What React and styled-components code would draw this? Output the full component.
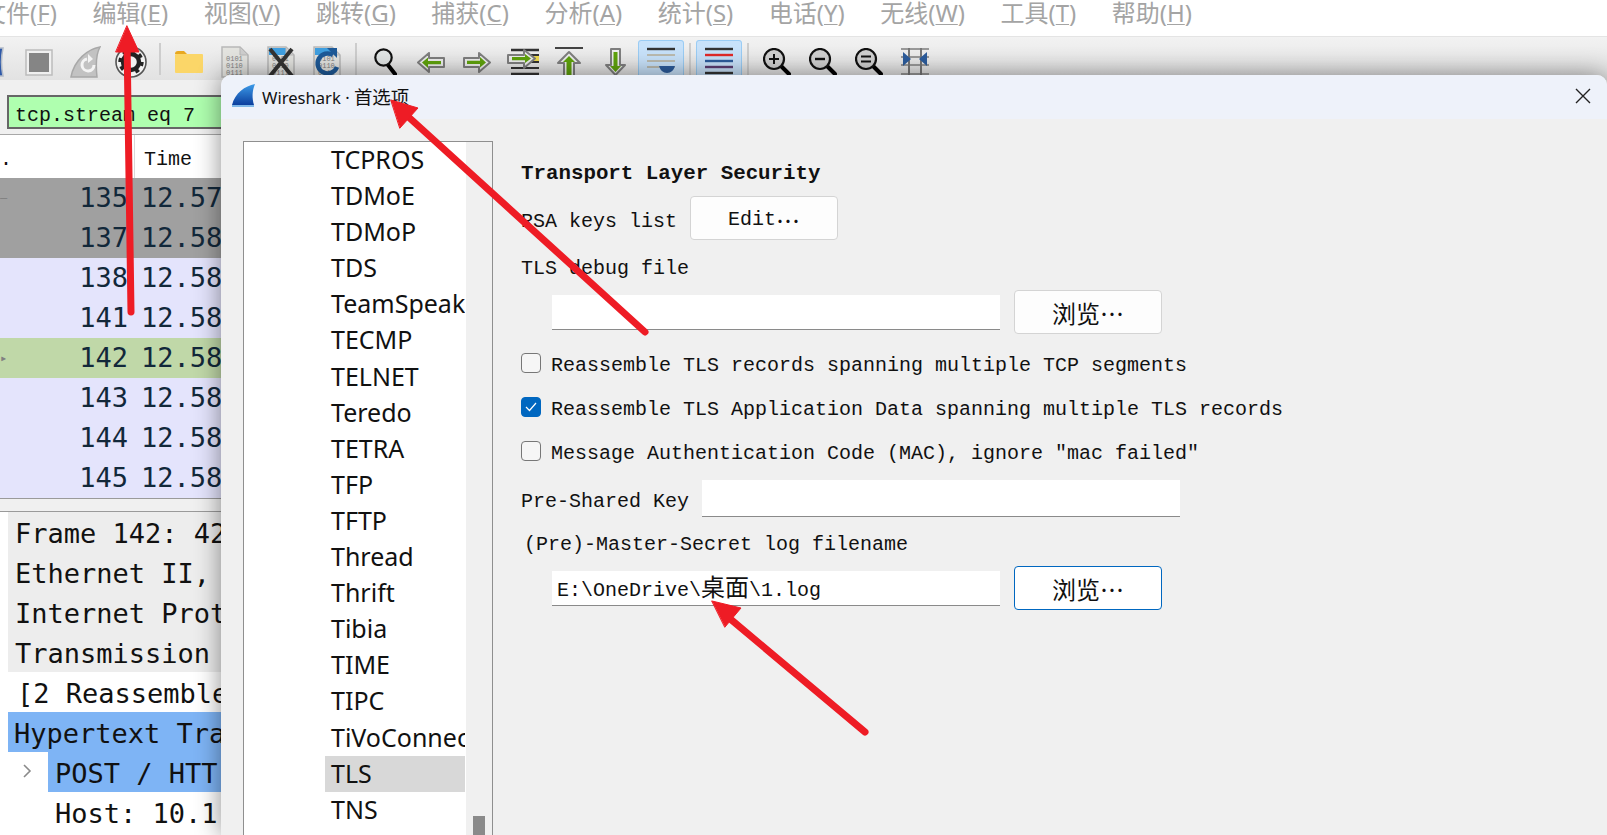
import styled, { createGlobalStyle } from "styled-components"

const MONO = '"Liberation Mono", "Noto Sans CJK SC", monospace'
const CODE = '"DejaVu Sans Mono", monospace'
const SANS = '"Noto Sans", "Noto Sans CJK SC", sans-serif'
const CJK = '"Noto Sans CJK SC", sans-serif'

const GlobalStyle = createGlobalStyle`
    html, body {
        margin: 0;
        padding: 0;
        height: 835px;
        overflow: hidden;
        background: #ffffff;
        font-family: ${SANS};
    }
`

const menus = [
    ["文件(", "F", ")"], ["编辑(", "E", ")"], ["视图(", "V", ")"], ["跳转(", "G", ")"],
    ["捕获(", "C", ")"], ["分析(", "A", ")"], ["统计(", "S", ")"], ["电话(", "Y", ")"],
    ["无线(", "W", ")"], ["工具(", "T", ")"], ["帮助(", "H", ")"],
]

const packets = [
    { no: 135, time: "12.57", kind: "dark", mark: "–" },
    { no: 137, time: "12.58", kind: "dark" },
    { no: 138, time: "12.58", kind: "plain" },
    { no: 141, time: "12.58", kind: "plain" },
    { no: 142, time: "12.58", kind: "picked", mark: "▸" },
    { no: 143, time: "12.58", kind: "plain" },
    { no: 144, time: "12.58", kind: "plain" },
    { no: 145, time: "12.58", kind: "plain" },
]

const protocols = ["TCPROS", "TDMoE", "TDMoP", "TDS", "TeamSpeak2", "TECMP", "TELNET", "Teredo", "TETRA", "TFP", "TFTP", "Thread", "Thrift", "Tibia", "TIME", "TIPC", "TiVoConnect", "TLS", "TNS", "TPCP"]

function FileIcon({ blue, children }) {
    return (
        <svg width="28" height="32" viewBox="0 0 28 32">
            <path d="M1 1h18l8 8v22H1z" fill="#e4e4e0" stroke="#b8b8b8" strokeWidth="1.5" />
            {blue && <path d="M2 2h17v7H2z" fill="#3f9fe0" />}
            <path d="M19 1v8h8z" fill="#cfcfcf" stroke="#b8b8b8" />
            <text x="5" y="15" fontSize="7" fontFamily={MONO} fill="#808080">0101</text>
            <text x="5" y="22" fontSize="7" fontFamily={MONO} fill="#808080">0110</text>
            <text x="5" y="29" fontSize="7" fontFamily={MONO} fill="#808080">0111</text>
            {children}
        </svg>
    )
}

function Lens({ sign }) {
    return (
        <svg width="28" height="28" viewBox="0 0 28 28">
            <line x1="18" y1="18" x2="26" y2="26" stroke="#000" strokeWidth="4" strokeLinecap="round" />
            <circle cx="11" cy="11" r="10" fill="#d0d0d0" stroke="#111" strokeWidth="2.2" />
            {sign === "plus" && <path d="M6 11h10M11 6v10" stroke="#111" strokeWidth="2" />}
            {sign === "minus" && <path d="M6 11h10" stroke="#111" strokeWidth="2.4" />}
            {sign === "equal" && <path d="M6 8.5h10M6 13.5h10" stroke="#111" strokeWidth="2" />}
        </svg>
    )
}

function ArrowGlyph({ rotate = 0, w = 28, h = 21 }) {
    return (
        <svg width={w} height={h} viewBox="0 0 28 21">
            <g transform={`rotate(${rotate} 14 10.5)`}>
                <path d="M1 10.5 12 1v5h15v9H12v5z" fill="#eeeeee" stroke="#7f7f7f" strokeWidth="2" strokeLinejoin="round" />
                <path d="M5 10.5 11 5.6V9h13v3.2H11v3.7z" fill="#5fa30c" />
            </g>
        </svg>
    )
}

function Toolbar() {
    return (
        <ToolRow>
            <Tool $w={24}>
                <svg width="16" height="32" viewBox="0 0 16 32"><path d="M0 2h7q-3 14 0 28H0z" fill="#2f59a8" stroke="#b4bcc8" strokeWidth="1.5" /></svg>
            </Tool>
            <Tool>
                <svg width="28" height="27" viewBox="0 0 28 27"><rect x="1" y="1" width="26" height="25" fill="#f0f0f0" stroke="#bcbcbc" strokeWidth="1.5" /><rect x="4" y="4" width="20" height="19" fill="#858585" /></svg>
            </Tool>
            <Tool>
                <svg width="31" height="32" viewBox="0 0 31 32"><path d="M30 1C18 3 4 14 1 31h26C26 22 25 10 30 1z" fill="#c2c2c2" stroke="#a8a8a8" strokeWidth="1.5" /><path d="M24 19a6 6 0 1 1-7-6" fill="none" stroke="#f4f4f4" strokeWidth="3" /><path d="M18 8l5 5-5 4z" fill="#f4f4f4" /></svg>
            </Tool>
            <Tool>
                <svg width="32" height="32" viewBox="0 0 32 32"><circle cx="16" cy="16" r="15" fill="#f2f2f2" stroke="#555" strokeWidth="1.6" /><circle cx="16" cy="16" r="8" fill="none" stroke="#222" strokeWidth="4.4" /><circle cx="16" cy="16" r="11" fill="none" stroke="#222" strokeWidth="3.4" strokeDasharray="4 4.6" /></svg>
            </Tool>
            <Separator />
            <Tool>
                <svg width="28" height="22" viewBox="0 0 28 22"><path d="M0 3q0-3 3-3h6l3 3H0z" fill="#e8a820" /><rect x="0" y="3" width="28" height="19" rx="1" fill="#fbd668" /></svg>
            </Tool>
            <Tool><FileIcon /></Tool>
            <Tool>
                <FileIcon blue><path d="M3 3 25 30M25 3 3 30" stroke="#333" strokeWidth="4" /></FileIcon>
            </Tool>
            <Tool>
                <FileIcon blue><path d="M24 21a10 10 0 1 1-4-12" fill="none" stroke="#1e5a98" strokeWidth="4.5" /><path d="M14 2h10v10z" fill="#1e5a98" /></FileIcon>
            </Tool>
            <Separator />
            <Tool>
                <svg width="23" height="28" viewBox="0 0 23 28"><line x1="14" y1="17" x2="21" y2="26" stroke="#000" strokeWidth="4" strokeLinecap="round" /><circle cx="9.5" cy="9.5" r="8.2" fill="#e2e6e6" stroke="#111" strokeWidth="2.2" /></svg>
            </Tool>
            <Tool><ArrowGlyph rotate={0} /></Tool>
            <Tool><ArrowGlyph rotate={180} /></Tool>
            <Tool>
                <svg width="32" height="28" viewBox="0 0 32 28"><path d="M4 2h28M4 26h28" stroke="#333" strokeWidth="2.4" /><path d="M4 20h28" stroke="#333" strokeWidth="2" /><path d="M22 7h10M22 14h10" stroke="#333" strokeWidth="2" /><rect x="26" y="8" width="6" height="5" fill="#f2dc50" /><path d="M28 10.5 17 2v5H1v8h16v5z" fill="#eeeeee" stroke="#7f7f7f" strokeWidth="2" strokeLinejoin="round" /><path d="M24 10.5 18 6v3H5v3.2h13V15z" fill="#5fa30c" /></svg>
            </Tool>
            <Tool>
                <svg width="28" height="31" viewBox="0 0 28 31"><path d="M0 1h28" stroke="#444" strokeWidth="2" /><path d="M14 5 25 16h-6v14H9V16H3z" fill="#eeeeee" stroke="#7f7f7f" strokeWidth="2" strokeLinejoin="round" /><path d="M14 9 20 15h-3.5v13h-5V15H8z" fill="#5fa30c" /></svg>
            </Tool>
            <Tool>
                <svg width="21" height="28" viewBox="0 0 21 28"><path d="M10.5 27 20 17h-5V1H6v16H1z" fill="#eeeeee" stroke="#7f7f7f" strokeWidth="2" strokeLinejoin="round" /><path d="M10.5 24 16 18h-3.5V4h-4v14H5z" fill="#5fa30c" /></svg>
            </Tool>
            <Tool $on>
                <svg width="28" height="30" viewBox="0 0 28 30"><path d="M0 2h28" stroke="#333" strokeWidth="2.4" /><path d="M0 8h28M0 14h28M0 20h28" stroke="#bbbbb0" strokeWidth="2" /><path d="M12 19h16q-2 7-8 7t-8-7z" fill="#2c5c9c" /></svg>
            </Tool>
            <Separator />
            <Tool $on>
                <svg width="28" height="30" viewBox="0 0 28 30"><path d="M0 2h28" stroke="#333" strokeWidth="2.4" /><path d="M0 8h28" stroke="#e02828" strokeWidth="2.4" /><path d="M0 14h28" stroke="#2c5c9c" strokeWidth="2.4" /><path d="M0 20h28" stroke="#5c3c70" strokeWidth="2.4" /><path d="M0 26h28" stroke="#333" strokeWidth="2.4" /></svg>
            </Tool>
            <Separator />
            <Tool><Lens sign="plus" /></Tool>
            <Tool><Lens sign="minus" /></Tool>
            <Tool><Lens sign="equal" /></Tool>
            <Tool>
                <svg width="28" height="28" viewBox="0 0 28 28"><path d="M0 1h28M0 9h28M0 17h28M0 26h28" stroke="#9a9a9a" strokeWidth="2" /><path d="M8 0v28M20 0v28" stroke="#777" strokeWidth="2" /><path d="M2 4 10 11 2 18zM26 4 18 11 26 18z" fill="#2c5c9c" /></svg>
            </Tool>
        </ToolRow>
    )
}

function Arrows() {
    return (
        <ArrowLayer viewBox="0 0 1607 835" width="1607" height="835">
            <g fill="#ee1c25" stroke="#ee1c25" strokeLinecap="round">
                <line x1="127" y1="40" x2="131" y2="312" strokeWidth="7" />
                <polygon points="127,26 139,52 116,52" strokeWidth="1" />
                <line x1="403" y1="112" x2="645" y2="332" strokeWidth="7" />
                <polygon points="391,100 418,108 400,128" strokeWidth="1" />
                <line x1="722" y1="612" x2="865" y2="732" strokeWidth="7" />
                <polygon points="712,601 741,608 725,627" strokeWidth="1" />
            </g>
        </ArrowLayer>
    )
}

export default function App() {
    return (
        <Page>
            <GlobalStyle />
            <MenuBar>
                {menus.map(([head, key, tail]) => (
                    <MenuItem key={key}>{head}<u>{key}</u>{tail}</MenuItem>
                ))}
            </MenuBar>
            <Toolbar />
            <FilterBar>
                <FilterInput>tcp.stream eq 7</FilterInput>
            </FilterBar>
            <ColumnHeader>
                <HeaderCell $w={135}>.</HeaderCell>
                <HeaderCell>Time</HeaderCell>
            </ColumnHeader>
            <PacketList>
                {packets.map(p => (
                    <PacketRow key={p.no} $kind={p.kind}>
                        <RowMark>{p.mark}</RowMark>
                        <PacketNo>{p.no}</PacketNo>
                        <span>{p.time}</span>
                    </PacketRow>
                ))}
            </PacketList>
            <Splitter />
            <DetailRow $bg="#ededed">Frame 142: 42</DetailRow>
            <DetailRow $bg="#ededed">Ethernet II,</DetailRow>
            <DetailRow $bg="#ededed">Internet Prot</DetailRow>
            <DetailRow $bg="#ededed">Transmission</DetailRow>
            <DetailRow $pad={9}>[2 Reassemble</DetailRow>
            <DetailRow $bg="#7eb4f5" $pad={6}>Hypertext Tra</DetailRow>
            <DetailRow $bg="#7eb4f5" $left={48}>
                <Chevron>
                    <svg width="10" height="14" viewBox="0 0 10 14"><path d="M2 1l6 6-6 6" fill="none" stroke="#8a8a8a" strokeWidth="1.6" /></svg>
                </Chevron>
                POST / HTT
            </DetailRow>
            <DetailRow $left={48}>Host: 10.1</DetailRow>

            <Dialog>
                <TitleBar>
                    <TitleGroup>
                        <svg width="24" height="24" viewBox="0 0 24 24">
                            <defs>
                                <linearGradient id="fin" x1="0" y1="0" x2="0" y2="1">
                                    <stop offset="0" stopColor="#3c9be8" />
                                    <stop offset="1" stopColor="#0c3f9e" />
                                </linearGradient>
                            </defs>
                            <path d="M23 0C13 2 3 9 0 21h22C20 14 20 7 23 0z" fill="url(#fin)" />
                            <rect x="0" y="21" width="22" height="2" fill="#7fb8e8" />
                        </svg>
                        <TitleText>Wireshark · <TitleCjk>首选项</TitleCjk></TitleText>
                    </TitleGroup>
                    <CloseButton>
                        <svg width="16" height="16" viewBox="0 0 16 16"><path d="M1 1l14 14M15 1 1 15" stroke="#222" strokeWidth="1.4" /></svg>
                    </CloseButton>
                </TitleBar>
                <DialogBody>
                    <Tree>
                        <TreeItems>
                            {protocols.map(name => (
                                <TreeItem key={name} $on={name === "TLS"}>{name}</TreeItem>
                            ))}
                        </TreeItems>
                        <ScrollTrack><ScrollThumb /></ScrollTrack>
                    </Tree>
                    <Form>
                        <FormTitle>Transport Layer Security</FormTitle>
                        <Row $gap={10} $h={44}>
                            <Label $drop>RSA keys list</Label>
                            <Button $mono $left={13}>Edit<Dots>⋯</Dots></Button>
                        </Row>
                        <Row $gap={13}><Label>TLS debug file</Label></Row>
                        <Row $gap={9} $h={44} $indent={31}>
                            <Field />
                            <Button $left={14}>浏览<Dots>⋯</Dots></Button>
                        </Row>
                        <Row $gap={16}>
                            <Check />
                            <Label>Reassemble TLS records spanning multiple TCP segments</Label>
                        </Row>
                        <Row $gap={16}>
                            <Check $on>
                                <svg width="12" height="10" viewBox="0 0 12 10"><path d="M1 5l3.5 3.5L11 1" fill="none" stroke="#fff" strokeWidth="1.2" /></svg>
                            </Check>
                            <Label>Reassemble TLS Application Data spanning multiple TLS records</Label>
                        </Row>
                        <Row $gap={16}>
                            <Check />
                            <Label>Message Authentication Code (MAC), ignore "mac failed"</Label>
                        </Row>
                        <Row $gap={14} $h={37}>
                            <Label $drop>Pre-Shared Key</Label>
                            <Field $w={478} $left={13} />
                        </Row>
                        <Row $gap={12} $indent={3}><Label>(Pre)-Master-Secret log filename</Label></Row>
                        <Row $gap={9} $h={44} $indent={31}>
                            <Field>E:\OneDrive\<Wide>桌面</Wide>\1.log</Field>
                            <Button $left={14} $focus>浏览<Dots>⋯</Dots></Button>
                        </Row>
                    </Form>
                </DialogBody>
            </Dialog>
            <Arrows />
        </Page>
    )
}

const Page = styled.div`
    position: relative;
    width: 1607px;
    height: 835px;
    overflow: hidden;
    background: #ffffff;
`
const MenuBar = styled.div`
    height: 37px;
    display: flex;
    align-items: center;
    column-gap: 35.5px;
    margin-left: -18px;
    border-bottom: 1px solid #e4e4e4;
    box-sizing: border-box;
    padding-bottom: 10px;
`
const MenuItem = styled.div`
    font-size: 24px;
    color: #a4a4a4;
    white-space: nowrap;
    line-height: 30px;
    u { text-underline-offset: 2px; text-decoration-thickness: 1px; }
`
const ToolRow = styled.div`
    height: 43px;
    display: flex;
    align-items: flex-start;
    padding-top: 3px;
    box-sizing: border-box;
    margin-left: -8px;
    overflow: hidden;
    background: linear-gradient(#f2f2f2, #e2e2e2);
`
const Tool = styled.div`
    flex: none;
    width: ${props => props.$w || 46}px;
    height: 44px;
    box-sizing: border-box;
    display: flex;
    align-items: center;
    justify-content: center;
    border-radius: 3px;
    background: ${props => props.$on ? "#c8e2fa" : "transparent"};
    outline: ${props => props.$on ? "1px solid #9accf4" : "none"};
    outline-offset: -1px;
`
const Separator = styled.div`
    flex: none;
    width: 2px;
    height: 32px;
    margin: 3px 5px 0;
    background: #cdcdcd;
`
const FilterBar = styled.div`
    height: 55px;
    padding-top: 15px;
    box-sizing: border-box;
    background: #f0f0f0;
    border-bottom: 1px solid #a8a8a8;
`
const FilterInput = styled.div`
    height: 34px;
    box-sizing: border-box;
    padding-left: 6px;
    margin-left: 7px;
    background: #afffaf;
    border-top: 2px solid #666666;
    border-bottom: 2px solid #666666;
    border-left: 2px solid #666666;
    font: 20px/37px ${MONO};
    color: #111111;
`
const ColumnHeader = styled.div`
    height: 43px;
    display: flex;
    background: #ffffff;
`
const HeaderCell = styled.div`
    width: ${props => props.$w ? props.$w + "px" : "auto"};
    box-sizing: border-box;
    padding-left: ${props => props.$w ? "0" : "9px"};
    padding-top: 7px;
    border-right: ${props => props.$w ? "1px solid #d8d8d8" : "none"};
    font: 20px/36px ${MONO};
    color: #111111;
`
const PacketList = styled.div`
    height: 320px;
`
const rowColors = { dark: "#a0a0a0", plain: "#e4e4fc", picked: "#c0d8a8" }
const PacketRow = styled.div`
    height: 40px;
    display: flex;
    align-items: center;
    background: ${props => rowColors[props.$kind]};
    font: 27px/40px ${CODE};
    color: #12283a;
`
const RowMark = styled.span`
    width: 10px;
    font-size: 12px;
    color: #808080;
`
const PacketNo = styled.span`
    width: 118px;
    margin-right: 13px;
    text-align: right;
`
const Splitter = styled.div`
    height: 14px;
    box-sizing: border-box;
    background: #f0f0f0;
    border-top: 1px solid #9a9a9a;
    border-bottom: 1px solid #9a9a9a;
`
const DetailRow = styled.div`
    position: relative;
    height: 40px;
    margin-left: ${props => props.$left || 8}px;
    padding-left: ${props => props.$pad || 7}px;
    background: ${props => props.$bg || "#ffffff"};
    font: 27px/44px ${CODE};
    color: #111111;
    white-space: nowrap;
`
const Chevron = styled.span`
    position: absolute;
    left: -26px;
    top: 12px;
    line-height: 0;
`
const Dialog = styled.div`
    position: absolute;
    left: 221px;
    top: 75px;
    width: 1386px;
    height: 760px;
    display: flex;
    flex-direction: column;
    background: #f0f0f0;
    border-radius: 10px 10px 0 0;
    box-shadow: 0 0 26px rgba(0, 0, 0, 0.45);
`
const TitleBar = styled.div`
    flex: none;
    height: 44px;
    box-sizing: border-box;
    display: flex;
    align-items: center;
    justify-content: space-between;
    padding: 0 16px 2px 11px;
    background: #eef2fa;
    border-radius: 10px 10px 0 0;
`
const TitleGroup = styled.div`
    display: flex;
    align-items: center;
    column-gap: 6px;
`
const TitleText = styled.span`
    font: 16.6px ${SANS};
    color: #111111;
    white-space: pre;
`
const TitleCjk = styled.span`
    font: 18.4px ${CJK};
`
const CloseButton = styled.div`
    line-height: 0;
`
const DialogBody = styled.div`
    flex: 1;
    display: flex;
    align-items: flex-start;
    padding: 22px 0 0 22px;
`
const Tree = styled.div`
    flex: none;
    width: 250px;
    height: 720px;
    box-sizing: border-box;
    display: flex;
    border: 1px solid #8f8f8f;
    overflow: hidden;
`
const TreeItems = styled.div`
    width: 222px;
    background: #ffffff;
    overflow: hidden;
`
const TreeItem = styled.div`
    height: 36.1px;
    margin-left: 81px;
    padding-left: 6px;
    width: 140px;
    box-sizing: border-box;
    background: ${props => props.$on ? "#d8d8d8" : "transparent"};
    font: 25px/35.6px ${SANS};
    color: #111111;
    white-space: nowrap;
    overflow: hidden;
`
const ScrollTrack = styled.div`
    flex: 1;
    padding: 674px 7px 0 7px;
    background: #f0f0f0;
`
const ScrollThumb = styled.div`
    height: 40px;
    background: #8a8a8a;
`
const Form = styled.div`
    flex: none;
    display: flex;
    flex-direction: column;
    padding: 17px 0 0 28px;
`
const FormTitle = styled.div`
    height: 28px;
    font: bold 20.8px/32px ${MONO};
    color: #111111;
`
const Row = styled.div`
    height: ${props => props.$h || 28}px;
    margin-top: ${props => props.$gap}px;
    padding-left: ${props => props.$indent || 0}px;
    display: flex;
    align-items: center;
`
const Label = styled.span`
    padding-top: ${props => props.$drop ? 7 : 3}px;
    font: 20px/28px ${MONO};
    color: #111111;
    white-space: nowrap;
`
const Button = styled.div`
    flex: none;
    width: 148px;
    height: 44px;
    box-sizing: border-box;
    margin-left: ${props => props.$left}px;
    padding-top: ${props => props.$mono ? 3 : 0}px;
    display: flex;
    align-items: center;
    justify-content: center;
    background: ${props => props.$focus ? "#ffffff" : "#fdfdfd"};
    border: 1px solid ${props => props.$focus ? "#0067c0" : "#d4d4d4"};
    border-radius: 4px;
    font: ${props => props.$mono ? `20px ${MONO}` : `24px ${CJK}`};
    color: #111111;
`
const Dots = styled.span`
    font: 24px ${CJK};
`
const Field = styled.div`
    flex: none;
    width: ${props => props.$w || 448}px;
    height: ${props => props.$w ? 37 : 35}px;
    box-sizing: border-box;
    margin-left: ${props => props.$left || 0}px;
    padding-left: 5px;
    background: #ffffff;
    border-bottom: 1px solid #8a8a8a;
    font: 20px/35px ${MONO};
    color: #111111;
`
const Wide = styled.span`
    font: 24px/30px ${CJK};
`
const Check = styled.span`
    flex: none;
    width: 20px;
    height: 20px;
    box-sizing: border-box;
    margin-right: 10px;
    margin-bottom: 2px;
    display: flex;
    align-items: center;
    justify-content: center;
    background: ${props => props.$on ? "#0067c0" : "#f6f6f6"};
    border: 1px solid ${props => props.$on ? "#0067c0" : "#777777"};
    border-radius: 4px;
`
const ArrowLayer = styled.svg`
    position: absolute;
    left: 0;
    top: 0;
    pointer-events: none;
`
